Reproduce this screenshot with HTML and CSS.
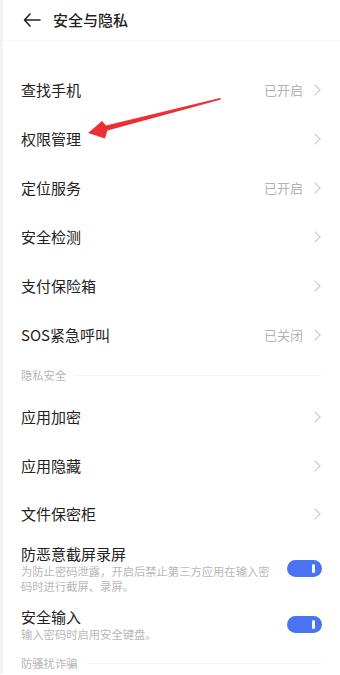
FILE: index.html
```html
<!DOCTYPE html>
<html lang="zh">
<head>
<meta charset="utf-8">
<link rel="stylesheet" href="styles.css">
</head>
<body>
<div class="page">
  <header class="header">
    <svg class="back" width="18" height="14" viewBox="0 0 18 14"><path d="M7 1 L1.5 7 L7 13 M1.5 7 H17" fill="none" stroke="#222" stroke-width="1.6" stroke-linecap="round" stroke-linejoin="round"/></svg>
    <span class="title">安全与隐私</span>
  </header>
  <div class="list first">
    <div class="row"><span class="label">查找手机</span><span class="right"><span class="status">已开启</span><span class="chev"></span></span></div>
    <div class="row"><span class="label">权限管理</span><span class="right"><span class="chev"></span></span></div>
    <div class="row"><span class="label">定位服务</span><span class="right"><span class="status">已开启</span><span class="chev"></span></span></div>
    <div class="row"><span class="label">安全检测</span><span class="right"><span class="chev"></span></span></div>
    <div class="row"><span class="label">支付保险箱</span><span class="right"><span class="chev"></span></span></div>
    <div class="row"><span class="label">SOS紧急呼叫</span><span class="right"><span class="status">已关闭</span><span class="chev"></span></span></div>
  </div>
  <div class="section"><span>隐私安全</span><i class="rule"></i></div>
  <div class="list second">
    <div class="row"><span class="label">应用加密</span><span class="right"><span class="chev"></span></span></div>
    <div class="row"><span class="label">应用隐藏</span><span class="right"><span class="chev"></span></span></div>
    <div class="row"><span class="label">文件保密柜</span><span class="right"><span class="chev"></span></span></div>
  </div>
  <div class="trow">
    <div class="tcol">
      <div class="label">防恶意截屏录屏</div>
      <div class="sub">为防止密码泄露，开启后禁止第三方应用在输入密码时进行截屏、录屏。</div>
    </div>
    <span class="toggle"><i></i></span>
  </div>
  <div class="trow">
    <div class="tcol">
      <div class="label">安全输入</div>
      <div class="sub">输入密码时启用安全键盘。</div>
    </div>
    <span class="toggle"><i></i></span>
  </div>
  <div class="section last"><span>防骚扰诈骗</span><i class="rule"></i></div>
  <svg class="arrow" width="340" height="675" viewBox="0 0 340 675"><polygon points="220,99 106,126.5 102,122 88,134 105,139.5 107.5,131.5 221,100.5" fill="#ec2f34"/></svg>
</div>
</body>
</html>
```
FILE: styles.css
```css
* { box-sizing: border-box; margin: 0; padding: 0; }
html, body { width: 340px; height: 675px; overflow: hidden; background: #fff; }
body { font-family: "Noto Sans CJK SC", "Noto Sans", sans-serif; color: #222; }
.page { position: relative; width: 340px; height: 675px; border-left: 3px solid #f2f2f2; }
.header { height: 42px; display: flex; align-items: center; padding-left: 20px; border-bottom: 1px solid #f8f8f8; margin-bottom: 24px; margin-top: -1px; }
.back { display: block; margin-right: 12px; }
.title { font-size: 15px; font-weight: 500; color: #222; }
.list { padding: 0 18px 0 18px; }
.row { height: 49px; display: flex; align-items: center; justify-content: space-between; }
.second .row { height: 48.5px; }
.label { font-size: 15px; color: #222; line-height: 20px; }
.right { display: flex; align-items: center; }
.status { font-size: 13px; color: #b3b3b3; margin-right: 8px; }
.chev { width: 8px; height: 8px; border-top: 1.2px solid #c6c6c6; border-right: 1.2px solid #c6c6c6; transform: rotate(45deg); margin-right: 3px; }
.section { height: 34px; display: flex; align-items: center; padding: 0 18px; padding-bottom: 2px; font-size: 11.3px; color: #b5b5b5; }
.section .rule { flex: 1; height: 1px; background: #f6f6f6; margin-left: 8px; }
.section.last { height: 44px; padding-top: 0; }
.trow { display: flex; align-items: center; padding: 5px 18px 8.5px; }
.trow + .trow { padding-bottom: 0; }
.tcol { flex: 1; }
.sub { font-size: 11.3px; color: #b8b8b8; line-height: 15px; padding-right: 14px; }
.toggle { width: 35px; height: 17px; border-radius: 9px; background: #4a73f3; display: flex; align-items: center; justify-content: flex-end; padding-right: 7px; flex: none; }
.toggle i { width: 3.5px; height: 9px; border-radius: 2px; background: #fff; }
.arrow { position: absolute; left: -3px; top: 0; pointer-events: none; }
```
